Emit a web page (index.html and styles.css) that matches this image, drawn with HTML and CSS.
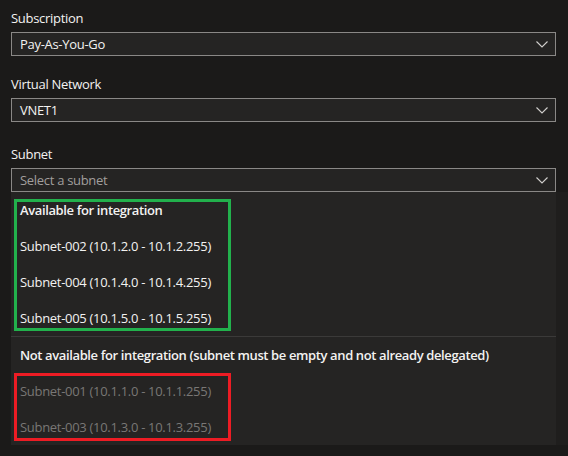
FILE: index.html
```html
<!DOCTYPE html>
<html lang="en">
<head>
<meta charset="utf-8">
<title>Subnet picker</title>
<link rel="stylesheet" href="styles.css">
</head>
<body>
<div class="page">
  <div class="field">
    <div class="label">Subscription</div>
    <div class="select">
      <span class="value">Pay-As-You-Go</span>
      <svg class="chev" width="12" height="7" viewBox="0 0 12 7"><path d="M0.5 0.5 L6 6 L11.5 0.5" fill="none" stroke="#d2d0ce" stroke-width="1.1"/></svg>
    </div>
  </div>
  <div class="field field--vnet">
    <div class="label">Virtual Network</div>
    <div class="select">
      <span class="value">VNET1</span>
      <svg class="chev" width="12" height="7" viewBox="0 0 12 7"><path d="M0.5 0.5 L6 6 L11.5 0.5" fill="none" stroke="#d2d0ce" stroke-width="1.1"/></svg>
    </div>
  </div>
  <div class="field field--subnet">
    <div class="label">Subnet</div>
    <div class="select">
      <span class="value placeholder">Select a subnet</span>
      <svg class="chev" width="12" height="7" viewBox="0 0 12 7"><path d="M0.5 0.5 L6 6 L11.5 0.5" fill="none" stroke="#d2d0ce" stroke-width="1.1"/></svg>
    </div>
    <div class="listbox">
      <div class="group">
        <div class="group-header">Available for integration</div>
        <div class="option">Subnet-002 (10.1.2.0 - 10.1.2.255)</div>
        <div class="option">Subnet-004 (10.1.4.0 - 10.1.4.255)</div>
        <div class="option">Subnet-005 (10.1.5.0 - 10.1.5.255)</div>
        <div class="mark mark--green"></div>
      </div>
      <div class="divider"></div>
      <div class="group">
        <div class="group-header">Not available for integration (subnet must be empty and not already delegated)</div>
        <div class="option option--disabled">Subnet-001 (10.1.1.0 - 10.1.1.255)</div>
        <div class="option option--disabled">Subnet-003 (10.1.3.0 - 10.1.3.255)</div>
        <div class="mark mark--red"></div>
      </div>
    </div>
  </div>
</div>
</body>
</html>
```

FILE: styles.css
```css
html, body {
  margin: 0;
  padding: 0;
  background: #1b1a19;
}
body {
  font-family: "Open Sans", "Noto Sans", sans-serif;
  font-size: 13px;
  letter-spacing: -0.3px;
  color: #f3f2f1;
  width: 568px;
  height: 456px;
  overflow: hidden;
}
.page {
  padding: 10px 12px 0 11px;
}
.field {
  display: flex;
  flex-direction: column;
}
.field--vnet {
  margin-top: 20px;
}
.field--subnet {
  margin-top: 24px;
}
.label {
  height: 17px;
  line-height: 17px;
  margin-bottom: 5px;
  color: #f3f2f1;
}
.select {
  height: 24px;
  box-sizing: border-box;
  border: 1px solid #8a8886;
  background: #252423;
  display: flex;
  align-items: center;
  padding: 0 7px 0 8px;
}
.value {
  flex: 1;
  line-height: 20px;
}
.placeholder {
  color: #a19f9d;
}
.chev {
  display: block;
  margin-top: 1px;
}
.listbox {
  background: #252423;
  box-shadow: 12px 0 0 0 #1f1e1d;
}
.group {
  position: relative;
}
.group-header,
.option {
  height: 36px;
  line-height: 36px;
  padding-left: 9px;
  white-space: nowrap;
}
.group-header {
  font-weight: 600;
  letter-spacing: -0.38px;
}
.option--disabled {
  color: #797775;
}
.divider {
  height: 1px;
  background: #3b3a39;
}
.mark {
  position: absolute;
  left: 3px;
  width: 217px;
  box-sizing: border-box;
  border: 3px solid;
  pointer-events: none;
}
.mark--green {
  top: 7px;
  height: 132px;
  border-color: #22b14c;
}
.mark--red {
  top: 36px;
  height: 68px;
  border-color: #ed1c24;
}
```
